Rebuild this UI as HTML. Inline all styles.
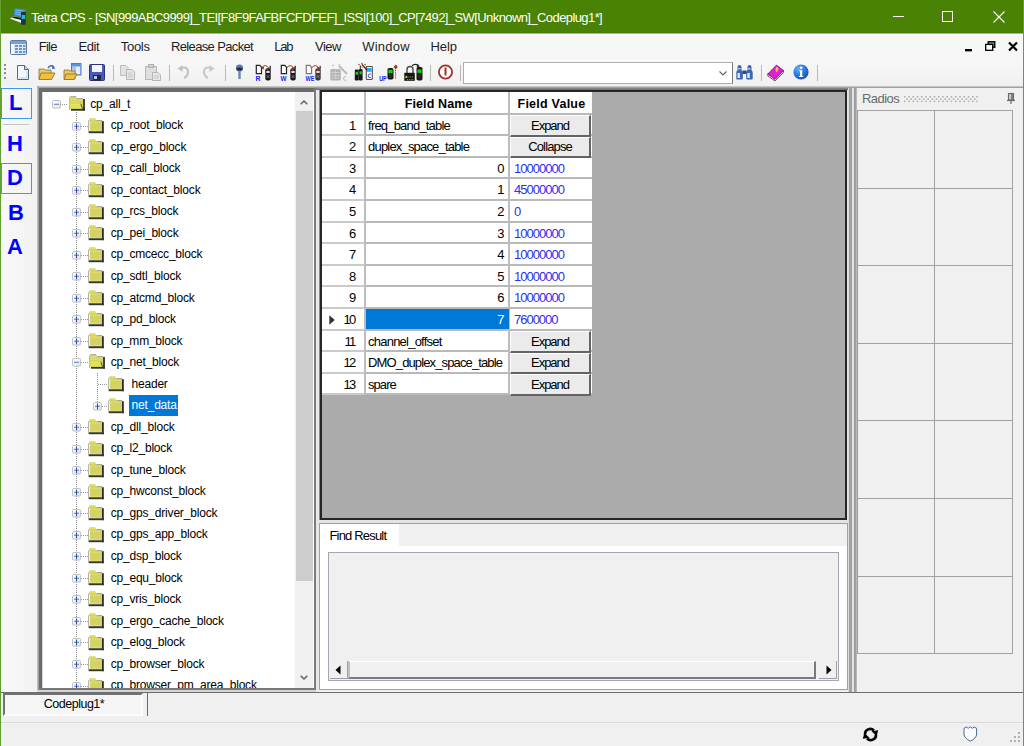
<!DOCTYPE html><html><head><meta charset="utf-8"><style>

*{margin:0;padding:0;box-sizing:border-box}
html,body{width:1024px;height:746px;overflow:hidden;background:#f0f0f0;font-family:"Liberation Sans",sans-serif;position:relative}
.abs{position:absolute}
.t{position:absolute;white-space:nowrap;line-height:1}
svg{position:absolute;overflow:visible}

</style></head><body>
<div class="abs" style="left:0;top:0;width:1024px;height:33px;background:#498205"></div>
<div class="abs" style="left:0;top:0;width:1px;height:746px;background:#62a032"></div>
<div class="abs" style="left:1023px;top:0;width:1px;height:746px;background:#62a032"></div>
<svg style="left:9px;top:7px" width="18" height="19" viewBox="0 0 18 19">
<path d="M5.7 1.2 L17 2.5 L15 10.5 L5 8.3 Z" fill="#3c8ee6"/>
<path d="M6.5 3 L15 4 M6.3 5 L14.5 6 M6 7 L13 8" stroke="#7cc0f4" stroke-width="0.8"/>
<path d="M0.8 11.5 L6 9.3 L13.5 11.5 L12.5 16 Z" fill="#f0f0f4"/>
<path d="M3 10.8 L6 9.5 L13 11.3 L12.7 13 Z" fill="#151515"/>
<rect x="12" y="4.7" width="4.8" height="13" rx="0.8" fill="#2a3038"/>
<rect x="12.6" y="8" width="3.6" height="4" fill="#28b0e8"/>
</svg>
<div class="t" style="left:31.20px;top:11.29px;font-size:13px;color:#fff;letter-spacing:-0.586px">Tetra CPS - [SN[999ABC9999]_TEI[F8F9FAFBFCFDFEF]_ISSI[100]_CP[7492]_SW[Unknown]_Codeplug1*]</div>
<div class="abs" style="left:893px;top:16px;width:11px;height:1px;background:#fff"></div>
<div class="abs" style="left:942px;top:11px;width:11px;height:11px;border:1px solid #fff"></div>
<svg style="left:993px;top:11px" width="12" height="12" viewBox="0 0 12 12"><path d="M0.5 0.5 L11.5 11.5 M11.5 0.5 L0.5 11.5" stroke="#fff" stroke-width="1.1"/></svg>
<div class="abs" style="left:1px;top:33px;width:1022px;height:26px;background:linear-gradient(#a4c182 0 1px,#fff 1px 2px,#f7f7f7 2px,#f6f6f6)"></div>
<div class="abs" style="left:1px;top:32px;width:1022px;height:1px;background:#457c03"></div>
<svg style="left:9.5px;top:39.5px" width="17" height="15" viewBox="0 0 17 15">
<rect x="0.5" y="0.5" width="16" height="14" rx="1" fill="#dfe9f5" stroke="#5a7ca8"/>
<rect x="1" y="1" width="15" height="3" fill="#7aa0d0"/>
<g fill="#6f95c8"><rect x="5" y="5" width="3" height="2"/><rect x="9" y="5" width="3" height="2"/><rect x="13" y="5" width="2.5" height="2"/>
<rect x="5" y="8" width="3" height="2"/><rect x="9" y="8" width="3" height="2"/><rect x="13" y="8" width="2.5" height="2"/>
<rect x="5" y="11" width="3" height="2"/><rect x="9" y="11" width="3" height="2"/><rect x="13" y="11" width="2.5" height="2"/></g>
<rect x="1" y="4" width="3" height="10" fill="#f4f8fc"/>
</svg>
<div class="t" style="left:38.70px;top:39.79px;font-size:13px;color:#1e1e1e;letter-spacing:-0.747px">File</div>
<div class="t" style="left:78.50px;top:39.79px;font-size:13px;color:#1e1e1e;letter-spacing:-0.433px">Edit</div>
<div class="t" style="left:120.70px;top:39.79px;font-size:13px;color:#1e1e1e;letter-spacing:-0.260px">Tools</div>
<div class="t" style="left:171.00px;top:39.79px;font-size:13px;color:#1e1e1e;letter-spacing:-0.643px">Release Packet</div>
<div class="t" style="left:274.20px;top:39.79px;font-size:13px;color:#1e1e1e;letter-spacing:-1.250px">Lab</div>
<div class="t" style="left:315.00px;top:39.79px;font-size:13px;color:#1e1e1e;letter-spacing:-0.493px">View</div>
<div class="t" style="left:362.30px;top:39.79px;font-size:13px;color:#1e1e1e;letter-spacing:0.208px">Window</div>
<div class="t" style="left:430.40px;top:39.79px;font-size:13px;color:#1e1e1e;letter-spacing:-0.047px">Help</div>
<div class="abs" style="left:965px;top:49px;width:7px;height:2px;background:#000;box-shadow:0 0.5px 0 #444"></div>
<svg style="left:985px;top:41px" width="11" height="10" viewBox="0 0 11 10"><rect x="3.2" y="0.7" width="6.6" height="5.6" fill="#888" stroke="#000" stroke-width="1.3"/><rect x="0.7" y="3.4" width="7" height="5.9" fill="#fff" stroke="#000" stroke-width="1.3"/></svg>
<svg style="left:1008px;top:42px" width="10" height="9" viewBox="0 0 10 9"><path d="M1 0.5 L9 8.5 M9 0.5 L1 8.5" stroke="#000" stroke-width="2.2"/></svg>
<div class="abs" style="left:1px;top:59px;width:1022px;height:27px;background:linear-gradient(#f8f8f8,#f0f0f0)"></div>
<div class="abs" style="left:35px;top:86px;width:988px;height:4px;background:linear-gradient(#d8d8d8,#a4a4a4 35%,#7c7c7c 70%,#6a6a6a)"></div>
<div class="abs" style="left:4px;top:64px;width:2px;height:2px;background:#8a8a8a"></div>
<div class="abs" style="left:4px;top:68px;width:2px;height:2px;background:#8a8a8a"></div>
<div class="abs" style="left:4px;top:72px;width:2px;height:2px;background:#8a8a8a"></div>
<div class="abs" style="left:4px;top:77px;width:2px;height:2px;background:#8a8a8a"></div>
<div class="abs" style="left:113px;top:65px;width:1px;height:16px;background:#b8b8b8"></div>
<div class="abs" style="left:169px;top:65px;width:1px;height:16px;background:#b8b8b8"></div>
<div class="abs" style="left:225px;top:65px;width:1px;height:16px;background:#b8b8b8"></div>
<div class="abs" style="left:430px;top:65px;width:1px;height:16px;background:#b8b8b8"></div>
<div class="abs" style="left:460px;top:65px;width:1px;height:16px;background:#b8b8b8"></div>
<div class="abs" style="left:761px;top:65px;width:1px;height:16px;background:#b8b8b8"></div>
<div class="abs" style="left:817px;top:65px;width:1px;height:16px;background:#b8b8b8"></div>
<svg style="left:16px;top:64px" width="14" height="17" viewBox="0 0 14 17"><path d="M1.5 1.5 H8.5 L12.5 5.5 V15.5 H1.5 Z" fill="#f4f7fb" stroke="#4a6a8a" stroke-width="1"/><path d="M8.5 1.5 V5.5 H12.5" fill="#c8d4e0" stroke="#4a6a8a"/><path d="M3 14 L11 14 L11 7" stroke="#c0cde0" fill="none"/></svg>
<svg style="left:38px;top:64px" width="19" height="17" viewBox="0 0 19 17"><path d="M1 5 H6 L7 6 H13 V15 H1 Z" fill="#e8c860" stroke="#8a7040" stroke-width="0.8"/><path d="M3 9 H17 L13.5 15.5 H1 Z" fill="#f2c040" stroke="#8a6a30" stroke-width="0.8"/><path d="M10 4 Q13 0 16 3" fill="none" stroke="#3a6ab0" stroke-width="1.4"/><path d="M14.5 1.5 L17.5 4.5 L14 5 Z" fill="#3a6ab0"/></svg>
<svg style="left:63px;top:63px" width="19" height="18" viewBox="0 0 19 18"><rect x="8.5" y="0.5" width="9.5" height="11.5" fill="#a8c8ee" stroke="#4a7cc8"/><rect x="9" y="1" width="8.5" height="2.2" fill="#5a94dc"/><rect x="13" y="4" width="4" height="7" fill="#e8f0fa"/><path d="M1 7 H6 L7 8 H12 V16 H1 Z" fill="#e8c860" stroke="#8a7040" stroke-width="0.8"/><path d="M3 11 H14 L11 16.5 H1 Z" fill="#f2c040" stroke="#8a6a30" stroke-width="0.8"/></svg>
<svg style="left:89px;top:64px" width="16" height="17" viewBox="0 0 16 17"><rect x="0.5" y="0.5" width="15" height="16" rx="1" fill="#4a5ab8" stroke="#2a3478"/><rect x="3" y="1" width="10" height="7" fill="#f4f6fa"/><rect x="4" y="11" width="8" height="5.5" fill="#20284a"/><rect x="5" y="12" width="3" height="3" fill="#c0c8e0"/></svg>
<svg style="left:119px;top:64px" width="17" height="16" viewBox="0 0 17 16"><path d="M1.5 1.5 H7 L9 3.5 V11.5 H1.5 Z" fill="#e2e2e2" stroke="#bdbdbd"/><path d="M7.5 5.5 H13 L15.5 8 V15.5 H7.5 Z" fill="#e6e6e6" stroke="#b5b5b5"/><path d="M9 9 H13 M9 11 H14 M9 13 H14" stroke="#c4c4c4"/></svg>
<svg style="left:144px;top:64px" width="18" height="17" viewBox="0 0 18 17"><rect x="1.5" y="2.5" width="11" height="13" fill="#dedede" stroke="#b8b8b8"/><rect x="4.5" y="0.5" width="5" height="3" fill="#d0d0d0" stroke="#b0b0b0"/><path d="M8.5 8.5 H14 L16.5 11 V16.5 H8.5 Z" fill="#e8e8e8" stroke="#b5b5b5"/><path d="M10 12 H15 M10 14 H15" stroke="#c4c4c4"/></svg>
<svg style="left:177px;top:64px" width="14" height="15" viewBox="0 0 14 15"><path d="M4 4 Q11 2 11 8 Q11 12 7 14" fill="none" stroke="#c2c2c2" stroke-width="2.2"/><path d="M0.5 4.5 L5.5 1 L5.5 8 Z" fill="#c2c2c2"/></svg>
<svg style="left:201px;top:64px" width="14" height="15" viewBox="0 0 14 15"><path d="M10 4 Q3 2 3 8 Q3 12 7 14" fill="none" stroke="#c8c8c8" stroke-width="2.2"/><path d="M13.5 4.5 L8.5 1 L8.5 8 Z" fill="#c8c8c8"/></svg>
<svg style="left:235px;top:64px" width="9" height="16" viewBox="0 0 9 16"><circle cx="4.5" cy="4" r="3.6" fill="#5e7a9c"/><ellipse cx="4.5" cy="5" rx="3" ry="1.5" fill="#1a2a60"/><rect x="3.3" y="7" width="2.4" height="8" fill="#6a86a8"/></svg>
<svg style="left:255px;top:64px" width="18" height="17" viewBox="0 0 18 17"><path d="M1.3 1.3 H4.8 L6.5 3.2 V9.6 H1.3 Z" fill="#fff" stroke="#222" stroke-width="1.2"/><rect x="10.3" y="4.3" width="5.4" height="12.3" rx="2" fill="#1a1a1a"/><rect x="14.6" y="1.8" width="1.2" height="3.5" fill="#1a1a1a"/><rect x="11.4" y="6.8" width="3.2" height="2.2" fill="#e0e0e0"/><circle cx="12.2" cy="5.8" r="0.9" fill="#c02020"/><path d="M11.5 11 L14.5 14 M14.5 11 L11.5 14" stroke="#8a8a8a" stroke-width="0.8"/><path d="M7 3.5 Q10.5 -0.5 13.8 4" fill="none" stroke="#a82a1a" stroke-width="1"/><path d="M5.8 4.5 L9 2.2 L8.8 5.2 Z" fill="#a82a1a"/><text x="0.5" y="16.6" font-family="Liberation Sans" font-weight="bold" font-size="6.5" fill="#2020ff" textLength="5" lengthAdjust="spacingAndGlyphs">R</text></svg>
<svg style="left:280px;top:64px" width="18" height="17" viewBox="0 0 18 17"><path d="M1.3 1.3 H4.8 L6.5 3.2 V9.6 H1.3 Z" fill="#fff" stroke="#222" stroke-width="1.2"/><rect x="10.3" y="4.3" width="5.4" height="12.3" rx="2" fill="#1a1a1a"/><rect x="14.6" y="1.8" width="1.2" height="3.5" fill="#1a1a1a"/><rect x="11.4" y="6.8" width="3.2" height="2.2" fill="#e0e0e0"/><circle cx="12.2" cy="5.8" r="0.9" fill="#c02020"/><path d="M11.5 11 L14.5 14 M14.5 11 L11.5 14" stroke="#8a8a8a" stroke-width="0.8"/><path d="M7 3.5 Q10.5 -0.5 13.8 4" fill="none" stroke="#a82a1a" stroke-width="1"/><path d="M12 3 L15 3.2 L13.5 6 Z" fill="#a82a1a"/><text x="0.5" y="16.6" font-family="Liberation Sans" font-weight="bold" font-size="6.5" fill="#2020ff" textLength="6" lengthAdjust="spacingAndGlyphs">W</text></svg>
<svg style="left:305px;top:64px" width="18" height="17" viewBox="0 0 18 17"><path d="M1.3 1.3 H4.8 L6.5 3.2 V9.6 H1.3 Z" fill="#fff" stroke="#777" stroke-width="1.2"/><rect x="10.3" y="4.3" width="5.4" height="12.3" rx="2" fill="#3a3a3a"/><rect x="14.6" y="1.8" width="1.2" height="3.5" fill="#3a3a3a"/><rect x="11.4" y="6.8" width="3.2" height="2.2" fill="#e0e0e0"/><circle cx="12.2" cy="5.8" r="0.9" fill="#c02020"/><path d="M11.5 11 L14.5 14 M14.5 11 L11.5 14" stroke="#8a8a8a" stroke-width="0.8"/><path d="M7 3.5 Q10.5 -0.5 13.8 4" fill="none" stroke="#a82a1a" stroke-width="1"/><path d="M12 3 L15 3.2 L13.5 6 Z" fill="#a82a1a"/><text x="0.5" y="16.6" font-family="Liberation Sans" font-weight="bold" font-size="6.5" fill="#2020ff" textLength="9" lengthAdjust="spacingAndGlyphs">WE</text></svg>
<svg style="left:330px;top:64px" width="19" height="17" viewBox="0 0 19 17"><rect x="0.3" y="5" width="10.5" height="11.5" rx="1.5" fill="#b4b4b4"/><path d="M1.5 8.5 H9.5 M1.5 11.5 H9.5 M1.5 14 H9.5" stroke="#d8d8d8" stroke-width="0.8"/><path d="M5.5 6 V15" stroke="#d0d0d0" stroke-width="0.8"/><path d="M9 2 L17 10" stroke="#b8b8b8" stroke-width="1.8"/><circle cx="3" cy="1.5" r="0.9" fill="#c4c4c4"/><circle cx="9" cy="0.8" r="0.9" fill="#c4c4c4"/><path d="M16 12.5 Q13.5 12.5 13.5 14.5 Q13.5 16.5 16 16.5" fill="none" stroke="#b0b0b0" stroke-width="0.9"/></svg>
<svg style="left:354px;top:63px" width="20" height="18" viewBox="0 0 20 18"><rect x="0.8" y="6.5" width="4" height="11" rx="1.2" fill="#141414"/><rect x="1.6" y="8.8" width="2.4" height="3" fill="#10d010"/><rect x="4.8" y="6" width="3.8" height="11.5" rx="1.2" fill="#181818"/><rect x="5.6" y="8.3" width="2.3" height="3" fill="#10c810"/><rect x="5.8" y="2.5" width="1" height="4" fill="#222"/><rect x="12.3" y="3.5" width="6" height="13" rx="0.8" fill="#fff" stroke="#505050" stroke-width="1.1"/><rect x="13" y="5" width="4.6" height="3.8" fill="#18b0f0"/><path d="M16.8 11 Q14.2 10.5 14.2 12.8 Q14.2 15 16.8 14.6" fill="none" stroke="#4a4af0" stroke-width="1"/><path d="M8 1.5 L13 7" stroke="#303030" stroke-width="1.3"/><circle cx="8.5" cy="4" r="1.1" fill="#c8c030"/><circle cx="5" cy="1.5" r="0.8" fill="#c04040"/><circle cx="8" cy="0.6" r="0.8" fill="#b05050"/><circle cx="11" cy="1.5" r="0.8" fill="#a04848"/><circle cx="12.5" cy="4" r="0.8" fill="#c04040"/></svg>
<svg style="left:378px;top:64px" width="20" height="17" viewBox="0 0 20 17"><rect x="9.5" y="4" width="6" height="11.6" rx="1.8" fill="#161616"/><rect x="10.4" y="5.8" width="4.2" height="3.4" fill="#10d010"/><path d="M11 11 H14 M11 13 H14" stroke="#555" stroke-width="0.6"/><path d="M17.5 4 V15" stroke="#b04040" stroke-width="1.1" stroke-dasharray="1.2,0.9"/><path d="M15.5 3.5 L17.8 0.5 L19.8 3.5 Z" fill="#9a2a20"/><circle cx="17.8" cy="3" r="1.6" fill="#a03028"/><text x="1.2" y="16.5" font-family="Liberation Sans" font-weight="bold" font-size="6.5" fill="#1010ff" textLength="7.5" lengthAdjust="spacingAndGlyphs">UP</text></svg>
<svg style="left:404px;top:63px" width="19" height="18" viewBox="0 0 19 18"><path d="M3 10 V6.5 Q3 3.5 6 3.5 Q9 3.5 9 6.5 V10" fill="none" stroke="#4a4a4a" stroke-width="1.4"/><rect x="0.3" y="9.8" width="10.5" height="8" fill="#141414"/><path d="M1.5 12.5 L4 14 L1.5 15.5 Z" fill="#d8e040"/><path d="M4.5 14 H9.5" stroke="#60b020" stroke-width="1.2" stroke-dasharray="1,0.8"/><path d="M3 16.5 H10" stroke="#a0c020" stroke-width="0.8" stroke-dasharray="1,0.8"/><path d="M8 2.8 Q11 0.2 14.5 2.5" fill="none" stroke="#222" stroke-width="1.3"/><path d="M13 1.2 L16 3.5 L12.8 4.5 Z" fill="#222"/><rect x="12.5" y="4" width="6" height="13.5" rx="1.8" fill="#181818"/><rect x="13.4" y="6.5" width="4.2" height="3.4" fill="#10d010"/><path d="M14 12 H17 M14 14 H17" stroke="#555" stroke-width="0.6"/></svg>
<svg style="left:437px;top:64px" width="17" height="16" viewBox="0 0 17 16"><circle cx="8.5" cy="8" r="6.6" fill="#fff" stroke="#a03028" stroke-width="1.8"/><rect x="7.5" y="3.5" width="2" height="8" fill="#a03028"/></svg>
<div class="abs" style="left:463px;top:62px;width:270px;height:22px;background:#fff;border:1px solid #adadad;border-right-color:#7a7a7a"></div>
<svg style="left:719px;top:71px" width="8" height="5" viewBox="0 0 8 5"><path d="M0.5 0.5 L4 4 L7.5 0.5" fill="none" stroke="#606060" stroke-width="1.1"/></svg>
<svg style="left:736px;top:64px" width="17" height="16" viewBox="0 0 17 16"><path d="M1.5 3 Q1.5 1 3.5 1 Q5.5 1 5.5 3 V6 L6.8 8 V14.5 Q6.8 15.5 5.8 15.5 H1.2 Q0.3 15.5 0.3 14.5 V8 L1.5 6 Z" fill="#3a66b4"/><path d="M11.5 3 Q11.5 1 13.5 1 Q15.5 1 15.5 3 V6 L16.7 8 V14.5 Q16.7 15.5 15.7 15.5 H11.2 Q10.2 15.5 10.2 14.5 V8 L11.5 6 Z" fill="#3a66b4"/><rect x="6.5" y="6.5" width="4" height="3.5" fill="#2a4a90"/><rect x="1.5" y="4" width="3" height="1.5" fill="#a8c4ec"/><rect x="11.5" y="4" width="3" height="1.5" fill="#a8c4ec"/><rect x="1.5" y="9" width="2.5" height="5" fill="#dbe8f8"/><rect x="11.3" y="9" width="2.5" height="5" fill="#dbe8f8"/></svg>
<svg style="left:767px;top:64px" width="18" height="17" viewBox="0 0 18 17"><path d="M0.8 10 L9.5 1.2 L16.5 6.5 L8 15.5 Z" fill="#e020d0" stroke="#7a1070" stroke-width="0.9"/><path d="M0.8 10 L0.8 12 L8 17 L16.5 8.5 L16.5 6.5 L8 15.5 Z" fill="#f4eef4" stroke="#7a1070" stroke-width="0.8"/><path d="M8.5 5.5 Q10 3.5 11.5 5 Q11 7 9.5 8.5 Q8.5 7.5 8.5 5.5 Z" fill="#e8c040"/><circle cx="10" cy="4.3" r="1.2" fill="#f0d060"/></svg>
<svg style="left:793px;top:64px" width="16" height="16" viewBox="0 0 16 16"><defs><radialGradient id="ig" cx="0.35" cy="0.3" r="0.8"><stop offset="0" stop-color="#6ab0f4"/><stop offset="0.6" stop-color="#1e72d8"/><stop offset="1" stop-color="#1a4aa0"/></radialGradient></defs><circle cx="8" cy="8" r="7.6" fill="url(#ig)"/><circle cx="8.2" cy="3.8" r="1.3" fill="#fff"/><path d="M6.3 6.3 H9.2 V12 H10.3 V13 H6 V12 H7 V7.3 H6.3 Z" fill="#fff"/></svg>
<div class="abs" style="left:1px;top:86px;width:36px;height:606px;background:linear-gradient(90deg,#f8f8f8,#f2f2f2);border-bottom-right-radius:4px"></div>
<div class="abs" style="left:1px;top:88px;width:31px;height:31px;border:1px solid #3c98f0"></div>
<div class="abs" style="left:1px;top:163px;width:31px;height:31px;border:1px solid #3c98f0"></div>
<div class="abs" style="left:3px;top:124px;width:26px;height:1px;background:#c4c4c4"></div>
<div class="t" style="left:9px;top:92px;font-size:22px;font-weight:bold;color:#0000ff">L</div>
<div class="t" style="left:7px;top:133px;font-size:22px;font-weight:bold;color:#0000ff">H</div>
<div class="t" style="left:7px;top:167px;font-size:22px;font-weight:bold;color:#0000ff">D</div>
<div class="t" style="left:8px;top:202px;font-size:22px;font-weight:bold;color:#0000ff">B</div>
<div class="t" style="left:7px;top:236px;font-size:22px;font-weight:bold;color:#0000ff">A</div>
<div class="abs" style="left:37px;top:88px;width:279px;height:604px;background:#6b6b6b"></div>
<div class="abs" style="left:37px;top:86px;width:2px;height:606px;background:linear-gradient(90deg,#c4c4c4,#949494)"></div>
<div class="abs" style="left:42px;top:92px;width:272px;height:596px;background:#fff"></div>
<div class="abs" style="left:42px;top:92px;width:1px;height:596px;background:#d8d8d8"></div>
<div class="abs" style="left:314px;top:88px;width:2px;height:602px;background:#787c80"></div>
<div class="abs" style="left:39px;top:688px;width:277px;height:2px;background:#787878"></div>
<div class="abs" style="left:37px;top:690px;width:279px;height:2px;background:#d4d4d4"></div>
<div class="abs" style="left:295px;top:92px;width:18px;height:596px;background:#f0f0f0"></div>
<div class="abs" style="left:295.5px;top:111px;width:17px;height:470px;background:#cdcdcd"></div>
<svg style="left:300px;top:99.5px" width="8" height="5" viewBox="0 0 8 5"><path d="M0.7 4.3 L4 1 L7.3 4.3" fill="none" stroke="#606060" stroke-width="1.5"/></svg>
<svg style="left:300px;top:675px" width="8" height="5" viewBox="0 0 8 5"><path d="M0.7 0.7 L4 4 L7.3 0.7" fill="none" stroke="#606060" stroke-width="1.5"/></svg>
<div class="abs" style="left:0;top:0;width:1024px;height:746px;clip-path:inset(92px 729px 58px 43px)">
<svg style="left:52.3px;top:99.8px" width="9" height="9" viewBox="0 0 9 9"><defs><linearGradient id="eg" x1="0" y1="0" x2="1" y2="1"><stop offset="0" stop-color="#fff"/><stop offset="1" stop-color="#e4e4e4"/></linearGradient></defs><rect x="0.5" y="0.5" width="8" height="7.6" rx="1.2" fill="url(#eg)" stroke="#c2c2c2"/><path d="M2 4.3 H7" stroke="#5b8ad2" stroke-width="1.1"/></svg>
<div class="abs" style="left:60px;top:104px;width:7px;height:1px;background:repeating-linear-gradient(90deg,#9a9a9a 0 1px,transparent 1px 2px)"></div>
<svg style="left:68px;top:96.0px" width="18" height="16" viewBox="0 0 18 16"><rect x="1" y="1.5" width="1.1" height="12.5" fill="#b8b8b8"/><path d="M1.8 0.8 Q2 0.2 3 0.2 H8 L9 2.3 H15.2 V13 H1.8 Z" fill="#d4d468"/><path d="M2.5 0.6 H8" stroke="#a8a8a8" stroke-width="1"/><path d="M9 2.5 H15.2" stroke="#a0a0a0" stroke-width="0.9"/><path d="M3 3.2 H9 M3 5.5 H9" stroke="#eeee50" stroke-width="1.2" stroke-dasharray="1.2,0.8"/><path d="M9.5 4.2 H14.5" stroke="#e6e65a" stroke-width="1" stroke-dasharray="1.2,0.8"/><path d="M1.5 7.8 H12.8 L14.5 12.8 H3 Z" fill="#e0e060"/><path d="M2.5 8.5 H12.5 M3.5 12 H13.5" stroke="#f0f048" stroke-width="1" stroke-dasharray="1.2,0.8"/><path d="M12.8 7.8 L14.5 12.8" stroke="#505040" stroke-width="1"/><rect x="15.1" y="3" width="1.8" height="11.6" fill="#2e2e2e"/><rect x="3" y="12.9" width="13.9" height="1.8" fill="#303030"/></svg>
<div class="t" style="left:90.30px;top:97.68px;font-size:12px;color:#000;letter-spacing:-0.177px">cp_all_t</div>
<div class="abs" style="left:76px;top:112px;width:1px;height:588px;background:repeating-linear-gradient(#8a8a8a 0 1px,transparent 1px 2px)"></div>
<svg style="left:72.3px;top:121.8px" width="9" height="9" viewBox="0 0 9 9"><rect x="0.5" y="0.5" width="8" height="7.6" rx="1.2" fill="url(#eg)" stroke="#c2c2c2"/><path d="M2 4.3 H7" stroke="#5b8ad2" stroke-width="1.1"/><path d="M4.5 1.5 V7.3" stroke="#2d4fa6" stroke-width="1.1"/></svg>
<div class="abs" style="left:81px;top:126px;width:7px;height:1px;background:repeating-linear-gradient(90deg,#9a9a9a 0 1px,transparent 1px 2px)"></div>
<svg style="left:88px;top:117.53999999999999px" width="17" height="16" viewBox="0 0 17 16"><rect x="0" y="2.4" width="1.1" height="12.8" fill="#b4b4b4"/><path d="M1 1.2 Q1.5 0.3 2.5 0.3 H7 L8.6 2.6 H14 V13.4 H1 Z" fill="#d2d266"/><path d="M8.6 2.6 H14.2" stroke="#9a9a8a" stroke-width="0.9"/><rect x="1.1" y="3" width="1" height="10.4" fill="#f4f4e0"/><path d="M2.5 4.2 H13.5 M2.5 12.3 H13.5" stroke="#ecec5a" stroke-width="1" stroke-dasharray="1.3,0.8"/><path d="M2 1.5 H7" stroke="#e8e860" stroke-width="1.2" stroke-dasharray="1.3,0.8"/><rect x="14" y="3.2" width="1.8" height="12" fill="#2c2c2c"/><rect x="1" y="13.3" width="14.8" height="1.9" fill="#343434"/></svg>
<div class="t" style="left:110.70px;top:119.22px;font-size:12px;color:#000;letter-spacing:-0.187px">cp_root_block</div>
<svg style="left:72.3px;top:142.8px" width="9" height="9" viewBox="0 0 9 9"><rect x="0.5" y="0.5" width="8" height="7.6" rx="1.2" fill="url(#eg)" stroke="#c2c2c2"/><path d="M2 4.3 H7" stroke="#5b8ad2" stroke-width="1.1"/><path d="M4.5 1.5 V7.3" stroke="#2d4fa6" stroke-width="1.1"/></svg>
<div class="abs" style="left:81px;top:147px;width:7px;height:1px;background:repeating-linear-gradient(90deg,#9a9a9a 0 1px,transparent 1px 2px)"></div>
<svg style="left:88px;top:139.07999999999998px" width="17" height="16" viewBox="0 0 17 16"><rect x="0" y="2.4" width="1.1" height="12.8" fill="#b4b4b4"/><path d="M1 1.2 Q1.5 0.3 2.5 0.3 H7 L8.6 2.6 H14 V13.4 H1 Z" fill="#d2d266"/><path d="M8.6 2.6 H14.2" stroke="#9a9a8a" stroke-width="0.9"/><rect x="1.1" y="3" width="1" height="10.4" fill="#f4f4e0"/><path d="M2.5 4.2 H13.5 M2.5 12.3 H13.5" stroke="#ecec5a" stroke-width="1" stroke-dasharray="1.3,0.8"/><path d="M2 1.5 H7" stroke="#e8e860" stroke-width="1.2" stroke-dasharray="1.3,0.8"/><rect x="14" y="3.2" width="1.8" height="12" fill="#2c2c2c"/><rect x="1" y="13.3" width="14.8" height="1.9" fill="#343434"/></svg>
<div class="t" style="left:110.70px;top:140.76px;font-size:12px;color:#000;letter-spacing:-0.195px">cp_ergo_block</div>
<svg style="left:72.3px;top:164.8px" width="9" height="9" viewBox="0 0 9 9"><rect x="0.5" y="0.5" width="8" height="7.6" rx="1.2" fill="url(#eg)" stroke="#c2c2c2"/><path d="M2 4.3 H7" stroke="#5b8ad2" stroke-width="1.1"/><path d="M4.5 1.5 V7.3" stroke="#2d4fa6" stroke-width="1.1"/></svg>
<div class="abs" style="left:81px;top:169px;width:7px;height:1px;background:repeating-linear-gradient(90deg,#9a9a9a 0 1px,transparent 1px 2px)"></div>
<svg style="left:88px;top:160.62px" width="17" height="16" viewBox="0 0 17 16"><rect x="0" y="2.4" width="1.1" height="12.8" fill="#b4b4b4"/><path d="M1 1.2 Q1.5 0.3 2.5 0.3 H7 L8.6 2.6 H14 V13.4 H1 Z" fill="#d2d266"/><path d="M8.6 2.6 H14.2" stroke="#9a9a8a" stroke-width="0.9"/><rect x="1.1" y="3" width="1" height="10.4" fill="#f4f4e0"/><path d="M2.5 4.2 H13.5 M2.5 12.3 H13.5" stroke="#ecec5a" stroke-width="1" stroke-dasharray="1.3,0.8"/><path d="M2 1.5 H7" stroke="#e8e860" stroke-width="1.2" stroke-dasharray="1.3,0.8"/><rect x="14" y="3.2" width="1.8" height="12" fill="#2c2c2c"/><rect x="1" y="13.3" width="14.8" height="1.9" fill="#343434"/></svg>
<div class="t" style="left:110.70px;top:162.30px;font-size:12px;color:#000;letter-spacing:-0.180px">cp_call_block</div>
<svg style="left:72.3px;top:185.8px" width="9" height="9" viewBox="0 0 9 9"><rect x="0.5" y="0.5" width="8" height="7.6" rx="1.2" fill="url(#eg)" stroke="#c2c2c2"/><path d="M2 4.3 H7" stroke="#5b8ad2" stroke-width="1.1"/><path d="M4.5 1.5 V7.3" stroke="#2d4fa6" stroke-width="1.1"/></svg>
<div class="abs" style="left:81px;top:190px;width:7px;height:1px;background:repeating-linear-gradient(90deg,#9a9a9a 0 1px,transparent 1px 2px)"></div>
<svg style="left:88px;top:182.16px" width="17" height="16" viewBox="0 0 17 16"><rect x="0" y="2.4" width="1.1" height="12.8" fill="#b4b4b4"/><path d="M1 1.2 Q1.5 0.3 2.5 0.3 H7 L8.6 2.6 H14 V13.4 H1 Z" fill="#d2d266"/><path d="M8.6 2.6 H14.2" stroke="#9a9a8a" stroke-width="0.9"/><rect x="1.1" y="3" width="1" height="10.4" fill="#f4f4e0"/><path d="M2.5 4.2 H13.5 M2.5 12.3 H13.5" stroke="#ecec5a" stroke-width="1" stroke-dasharray="1.3,0.8"/><path d="M2 1.5 H7" stroke="#e8e860" stroke-width="1.2" stroke-dasharray="1.3,0.8"/><rect x="14" y="3.2" width="1.8" height="12" fill="#2c2c2c"/><rect x="1" y="13.3" width="14.8" height="1.9" fill="#343434"/></svg>
<div class="t" style="left:110.70px;top:183.84px;font-size:12px;color:#000;letter-spacing:-0.185px">cp_contact_block</div>
<svg style="left:72.3px;top:207.8px" width="9" height="9" viewBox="0 0 9 9"><rect x="0.5" y="0.5" width="8" height="7.6" rx="1.2" fill="url(#eg)" stroke="#c2c2c2"/><path d="M2 4.3 H7" stroke="#5b8ad2" stroke-width="1.1"/><path d="M4.5 1.5 V7.3" stroke="#2d4fa6" stroke-width="1.1"/></svg>
<div class="abs" style="left:81px;top:212px;width:7px;height:1px;background:repeating-linear-gradient(90deg,#9a9a9a 0 1px,transparent 1px 2px)"></div>
<svg style="left:88px;top:203.7px" width="17" height="16" viewBox="0 0 17 16"><rect x="0" y="2.4" width="1.1" height="12.8" fill="#b4b4b4"/><path d="M1 1.2 Q1.5 0.3 2.5 0.3 H7 L8.6 2.6 H14 V13.4 H1 Z" fill="#d2d266"/><path d="M8.6 2.6 H14.2" stroke="#9a9a8a" stroke-width="0.9"/><rect x="1.1" y="3" width="1" height="10.4" fill="#f4f4e0"/><path d="M2.5 4.2 H13.5 M2.5 12.3 H13.5" stroke="#ecec5a" stroke-width="1" stroke-dasharray="1.3,0.8"/><path d="M2 1.5 H7" stroke="#e8e860" stroke-width="1.2" stroke-dasharray="1.3,0.8"/><rect x="14" y="3.2" width="1.8" height="12" fill="#2c2c2c"/><rect x="1" y="13.3" width="14.8" height="1.9" fill="#343434"/></svg>
<div class="t" style="left:110.70px;top:205.38px;font-size:12px;color:#000;letter-spacing:-0.191px">cp_rcs_block</div>
<svg style="left:72.3px;top:228.8px" width="9" height="9" viewBox="0 0 9 9"><rect x="0.5" y="0.5" width="8" height="7.6" rx="1.2" fill="url(#eg)" stroke="#c2c2c2"/><path d="M2 4.3 H7" stroke="#5b8ad2" stroke-width="1.1"/><path d="M4.5 1.5 V7.3" stroke="#2d4fa6" stroke-width="1.1"/></svg>
<div class="abs" style="left:81px;top:233px;width:7px;height:1px;background:repeating-linear-gradient(90deg,#9a9a9a 0 1px,transparent 1px 2px)"></div>
<svg style="left:88px;top:225.24px" width="17" height="16" viewBox="0 0 17 16"><rect x="0" y="2.4" width="1.1" height="12.8" fill="#b4b4b4"/><path d="M1 1.2 Q1.5 0.3 2.5 0.3 H7 L8.6 2.6 H14 V13.4 H1 Z" fill="#d2d266"/><path d="M8.6 2.6 H14.2" stroke="#9a9a8a" stroke-width="0.9"/><rect x="1.1" y="3" width="1" height="10.4" fill="#f4f4e0"/><path d="M2.5 4.2 H13.5 M2.5 12.3 H13.5" stroke="#ecec5a" stroke-width="1" stroke-dasharray="1.3,0.8"/><path d="M2 1.5 H7" stroke="#e8e860" stroke-width="1.2" stroke-dasharray="1.3,0.8"/><rect x="14" y="3.2" width="1.8" height="12" fill="#2c2c2c"/><rect x="1" y="13.3" width="14.8" height="1.9" fill="#343434"/></svg>
<div class="t" style="left:110.70px;top:226.92px;font-size:12px;color:#000;letter-spacing:-0.191px">cp_pei_block</div>
<svg style="left:72.3px;top:250.8px" width="9" height="9" viewBox="0 0 9 9"><rect x="0.5" y="0.5" width="8" height="7.6" rx="1.2" fill="url(#eg)" stroke="#c2c2c2"/><path d="M2 4.3 H7" stroke="#5b8ad2" stroke-width="1.1"/><path d="M4.5 1.5 V7.3" stroke="#2d4fa6" stroke-width="1.1"/></svg>
<div class="abs" style="left:81px;top:255px;width:7px;height:1px;background:repeating-linear-gradient(90deg,#9a9a9a 0 1px,transparent 1px 2px)"></div>
<svg style="left:88px;top:246.78px" width="17" height="16" viewBox="0 0 17 16"><rect x="0" y="2.4" width="1.1" height="12.8" fill="#b4b4b4"/><path d="M1 1.2 Q1.5 0.3 2.5 0.3 H7 L8.6 2.6 H14 V13.4 H1 Z" fill="#d2d266"/><path d="M8.6 2.6 H14.2" stroke="#9a9a8a" stroke-width="0.9"/><rect x="1.1" y="3" width="1" height="10.4" fill="#f4f4e0"/><path d="M2.5 4.2 H13.5 M2.5 12.3 H13.5" stroke="#ecec5a" stroke-width="1" stroke-dasharray="1.3,0.8"/><path d="M2 1.5 H7" stroke="#e8e860" stroke-width="1.2" stroke-dasharray="1.3,0.8"/><rect x="14" y="3.2" width="1.8" height="12" fill="#2c2c2c"/><rect x="1" y="13.3" width="14.8" height="1.9" fill="#343434"/></svg>
<div class="t" style="left:110.70px;top:248.46px;font-size:12px;color:#000;letter-spacing:-0.203px">cp_cmcecc_block</div>
<svg style="left:72.3px;top:271.8px" width="9" height="9" viewBox="0 0 9 9"><rect x="0.5" y="0.5" width="8" height="7.6" rx="1.2" fill="url(#eg)" stroke="#c2c2c2"/><path d="M2 4.3 H7" stroke="#5b8ad2" stroke-width="1.1"/><path d="M4.5 1.5 V7.3" stroke="#2d4fa6" stroke-width="1.1"/></svg>
<div class="abs" style="left:81px;top:276px;width:7px;height:1px;background:repeating-linear-gradient(90deg,#9a9a9a 0 1px,transparent 1px 2px)"></div>
<svg style="left:88px;top:268.32px" width="17" height="16" viewBox="0 0 17 16"><rect x="0" y="2.4" width="1.1" height="12.8" fill="#b4b4b4"/><path d="M1 1.2 Q1.5 0.3 2.5 0.3 H7 L8.6 2.6 H14 V13.4 H1 Z" fill="#d2d266"/><path d="M8.6 2.6 H14.2" stroke="#9a9a8a" stroke-width="0.9"/><rect x="1.1" y="3" width="1" height="10.4" fill="#f4f4e0"/><path d="M2.5 4.2 H13.5 M2.5 12.3 H13.5" stroke="#ecec5a" stroke-width="1" stroke-dasharray="1.3,0.8"/><path d="M2 1.5 H7" stroke="#e8e860" stroke-width="1.2" stroke-dasharray="1.3,0.8"/><rect x="14" y="3.2" width="1.8" height="12" fill="#2c2c2c"/><rect x="1" y="13.3" width="14.8" height="1.9" fill="#343434"/></svg>
<div class="t" style="left:110.70px;top:270.00px;font-size:12px;color:#000;letter-spacing:-0.182px">cp_sdtl_block</div>
<svg style="left:72.3px;top:293.8px" width="9" height="9" viewBox="0 0 9 9"><rect x="0.5" y="0.5" width="8" height="7.6" rx="1.2" fill="url(#eg)" stroke="#c2c2c2"/><path d="M2 4.3 H7" stroke="#5b8ad2" stroke-width="1.1"/><path d="M4.5 1.5 V7.3" stroke="#2d4fa6" stroke-width="1.1"/></svg>
<div class="abs" style="left:81px;top:298px;width:7px;height:1px;background:repeating-linear-gradient(90deg,#9a9a9a 0 1px,transparent 1px 2px)"></div>
<svg style="left:88px;top:289.86px" width="17" height="16" viewBox="0 0 17 16"><rect x="0" y="2.4" width="1.1" height="12.8" fill="#b4b4b4"/><path d="M1 1.2 Q1.5 0.3 2.5 0.3 H7 L8.6 2.6 H14 V13.4 H1 Z" fill="#d2d266"/><path d="M8.6 2.6 H14.2" stroke="#9a9a8a" stroke-width="0.9"/><rect x="1.1" y="3" width="1" height="10.4" fill="#f4f4e0"/><path d="M2.5 4.2 H13.5 M2.5 12.3 H13.5" stroke="#ecec5a" stroke-width="1" stroke-dasharray="1.3,0.8"/><path d="M2 1.5 H7" stroke="#e8e860" stroke-width="1.2" stroke-dasharray="1.3,0.8"/><rect x="14" y="3.2" width="1.8" height="12" fill="#2c2c2c"/><rect x="1" y="13.3" width="14.8" height="1.9" fill="#343434"/></svg>
<div class="t" style="left:110.70px;top:291.54px;font-size:12px;color:#000;letter-spacing:-0.200px">cp_atcmd_block</div>
<svg style="left:72.3px;top:314.8px" width="9" height="9" viewBox="0 0 9 9"><rect x="0.5" y="0.5" width="8" height="7.6" rx="1.2" fill="url(#eg)" stroke="#c2c2c2"/><path d="M2 4.3 H7" stroke="#5b8ad2" stroke-width="1.1"/><path d="M4.5 1.5 V7.3" stroke="#2d4fa6" stroke-width="1.1"/></svg>
<div class="abs" style="left:81px;top:319px;width:7px;height:1px;background:repeating-linear-gradient(90deg,#9a9a9a 0 1px,transparent 1px 2px)"></div>
<svg style="left:88px;top:311.4px" width="17" height="16" viewBox="0 0 17 16"><rect x="0" y="2.4" width="1.1" height="12.8" fill="#b4b4b4"/><path d="M1 1.2 Q1.5 0.3 2.5 0.3 H7 L8.6 2.6 H14 V13.4 H1 Z" fill="#d2d266"/><path d="M8.6 2.6 H14.2" stroke="#9a9a8a" stroke-width="0.9"/><rect x="1.1" y="3" width="1" height="10.4" fill="#f4f4e0"/><path d="M2.5 4.2 H13.5 M2.5 12.3 H13.5" stroke="#ecec5a" stroke-width="1" stroke-dasharray="1.3,0.8"/><path d="M2 1.5 H7" stroke="#e8e860" stroke-width="1.2" stroke-dasharray="1.3,0.8"/><rect x="14" y="3.2" width="1.8" height="12" fill="#2c2c2c"/><rect x="1" y="13.3" width="14.8" height="1.9" fill="#343434"/></svg>
<div class="t" style="left:110.70px;top:313.08px;font-size:12px;color:#000;letter-spacing:-0.202px">cp_pd_block</div>
<svg style="left:72.3px;top:336.8px" width="9" height="9" viewBox="0 0 9 9"><rect x="0.5" y="0.5" width="8" height="7.6" rx="1.2" fill="url(#eg)" stroke="#c2c2c2"/><path d="M2 4.3 H7" stroke="#5b8ad2" stroke-width="1.1"/><path d="M4.5 1.5 V7.3" stroke="#2d4fa6" stroke-width="1.1"/></svg>
<div class="abs" style="left:81px;top:341px;width:7px;height:1px;background:repeating-linear-gradient(90deg,#9a9a9a 0 1px,transparent 1px 2px)"></div>
<svg style="left:88px;top:332.94px" width="17" height="16" viewBox="0 0 17 16"><rect x="0" y="2.4" width="1.1" height="12.8" fill="#b4b4b4"/><path d="M1 1.2 Q1.5 0.3 2.5 0.3 H7 L8.6 2.6 H14 V13.4 H1 Z" fill="#d2d266"/><path d="M8.6 2.6 H14.2" stroke="#9a9a8a" stroke-width="0.9"/><rect x="1.1" y="3" width="1" height="10.4" fill="#f4f4e0"/><path d="M2.5 4.2 H13.5 M2.5 12.3 H13.5" stroke="#ecec5a" stroke-width="1" stroke-dasharray="1.3,0.8"/><path d="M2 1.5 H7" stroke="#e8e860" stroke-width="1.2" stroke-dasharray="1.3,0.8"/><rect x="14" y="3.2" width="1.8" height="12" fill="#2c2c2c"/><rect x="1" y="13.3" width="14.8" height="1.9" fill="#343434"/></svg>
<div class="t" style="left:110.70px;top:334.62px;font-size:12px;color:#000;letter-spacing:-0.222px">cp_mm_block</div>
<svg style="left:72.3px;top:357.8px" width="9" height="9" viewBox="0 0 9 9"><rect x="0.5" y="0.5" width="8" height="7.6" rx="1.2" fill="url(#eg)" stroke="#c2c2c2"/><path d="M2 4.3 H7" stroke="#5b8ad2" stroke-width="1.1"/></svg>
<div class="abs" style="left:81px;top:362px;width:7px;height:1px;background:repeating-linear-gradient(90deg,#9a9a9a 0 1px,transparent 1px 2px)"></div>
<svg style="left:88px;top:354.48px" width="18" height="16" viewBox="0 0 18 16"><rect x="1" y="1.5" width="1.1" height="12.5" fill="#b8b8b8"/><path d="M1.8 0.8 Q2 0.2 3 0.2 H8 L9 2.3 H15.2 V13 H1.8 Z" fill="#d4d468"/><path d="M2.5 0.6 H8" stroke="#a8a8a8" stroke-width="1"/><path d="M9 2.5 H15.2" stroke="#a0a0a0" stroke-width="0.9"/><path d="M3 3.2 H9 M3 5.5 H9" stroke="#eeee50" stroke-width="1.2" stroke-dasharray="1.2,0.8"/><path d="M9.5 4.2 H14.5" stroke="#e6e65a" stroke-width="1" stroke-dasharray="1.2,0.8"/><path d="M1.5 7.8 H12.8 L14.5 12.8 H3 Z" fill="#e0e060"/><path d="M2.5 8.5 H12.5 M3.5 12 H13.5" stroke="#f0f048" stroke-width="1" stroke-dasharray="1.2,0.8"/><path d="M12.8 7.8 L14.5 12.8" stroke="#505040" stroke-width="1"/><rect x="15.1" y="3" width="1.8" height="11.6" fill="#2e2e2e"/><rect x="3" y="12.9" width="13.9" height="1.8" fill="#303030"/></svg>
<div class="abs" style="left:97px;top:373px;width:1px;height:32px;background:repeating-linear-gradient(#8a8a8a 0 1px,transparent 1px 2px)"></div>
<div class="t" style="left:110.70px;top:356.16px;font-size:12px;color:#000;letter-spacing:-0.193px">cp_net_block</div>
<div class="abs" style="left:98px;top:384px;width:10px;height:1px;background:repeating-linear-gradient(90deg,#9a9a9a 0 1px,transparent 1px 2px)"></div>
<svg style="left:108px;top:376.02px" width="17" height="16" viewBox="0 0 17 16"><rect x="0" y="2.4" width="1.1" height="12.8" fill="#b4b4b4"/><path d="M1 1.2 Q1.5 0.3 2.5 0.3 H7 L8.6 2.6 H14 V13.4 H1 Z" fill="#d2d266"/><path d="M8.6 2.6 H14.2" stroke="#9a9a8a" stroke-width="0.9"/><rect x="1.1" y="3" width="1" height="10.4" fill="#f4f4e0"/><path d="M2.5 4.2 H13.5 M2.5 12.3 H13.5" stroke="#ecec5a" stroke-width="1" stroke-dasharray="1.3,0.8"/><path d="M2 1.5 H7" stroke="#e8e860" stroke-width="1.2" stroke-dasharray="1.3,0.8"/><rect x="14" y="3.2" width="1.8" height="12" fill="#2c2c2c"/><rect x="1" y="13.3" width="14.8" height="1.9" fill="#343434"/></svg>
<div class="t" style="left:131.60px;top:377.70px;font-size:12px;color:#000;letter-spacing:-0.224px">header</div>
<svg style="left:93.3px;top:401.8px" width="9" height="9" viewBox="0 0 9 9"><rect x="0.5" y="0.5" width="8" height="7.6" rx="1.2" fill="url(#eg)" stroke="#c2c2c2"/><path d="M2 4.3 H7" stroke="#5b8ad2" stroke-width="1.1"/><path d="M4.5 1.5 V7.3" stroke="#2d4fa6" stroke-width="1.1"/></svg>
<div class="abs" style="left:102px;top:406px;width:6px;height:1px;background:repeating-linear-gradient(90deg,#9a9a9a 0 1px,transparent 1px 2px)"></div>
<svg style="left:108px;top:397.56px" width="17" height="16" viewBox="0 0 17 16"><rect x="0" y="2.4" width="1.1" height="12.8" fill="#b4b4b4"/><path d="M1 1.2 Q1.5 0.3 2.5 0.3 H7 L8.6 2.6 H14 V13.4 H1 Z" fill="#d2d266"/><path d="M8.6 2.6 H14.2" stroke="#9a9a8a" stroke-width="0.9"/><rect x="1.1" y="3" width="1" height="10.4" fill="#f4f4e0"/><path d="M2.5 4.2 H13.5 M2.5 12.3 H13.5" stroke="#ecec5a" stroke-width="1" stroke-dasharray="1.3,0.8"/><path d="M2 1.5 H7" stroke="#e8e860" stroke-width="1.2" stroke-dasharray="1.3,0.8"/><rect x="14" y="3.2" width="1.8" height="12" fill="#2c2c2c"/><rect x="1" y="13.3" width="14.8" height="1.9" fill="#343434"/></svg>
<div class="abs" style="left:129px;top:395.4px;width:49px;height:20.5px;background:#0078d7"></div>
<div class="t" style="left:131.60px;top:399.24px;font-size:12px;color:#fff;letter-spacing:-0.200px">net_data</div>
<svg style="left:72.3px;top:422.8px" width="9" height="9" viewBox="0 0 9 9"><rect x="0.5" y="0.5" width="8" height="7.6" rx="1.2" fill="url(#eg)" stroke="#c2c2c2"/><path d="M2 4.3 H7" stroke="#5b8ad2" stroke-width="1.1"/><path d="M4.5 1.5 V7.3" stroke="#2d4fa6" stroke-width="1.1"/></svg>
<div class="abs" style="left:81px;top:427px;width:7px;height:1px;background:repeating-linear-gradient(90deg,#9a9a9a 0 1px,transparent 1px 2px)"></div>
<svg style="left:88px;top:419.09999999999997px" width="17" height="16" viewBox="0 0 17 16"><rect x="0" y="2.4" width="1.1" height="12.8" fill="#b4b4b4"/><path d="M1 1.2 Q1.5 0.3 2.5 0.3 H7 L8.6 2.6 H14 V13.4 H1 Z" fill="#d2d266"/><path d="M8.6 2.6 H14.2" stroke="#9a9a8a" stroke-width="0.9"/><rect x="1.1" y="3" width="1" height="10.4" fill="#f4f4e0"/><path d="M2.5 4.2 H13.5 M2.5 12.3 H13.5" stroke="#ecec5a" stroke-width="1" stroke-dasharray="1.3,0.8"/><path d="M2 1.5 H7" stroke="#e8e860" stroke-width="1.2" stroke-dasharray="1.3,0.8"/><rect x="14" y="3.2" width="1.8" height="12" fill="#2c2c2c"/><rect x="1" y="13.3" width="14.8" height="1.9" fill="#343434"/></svg>
<div class="t" style="left:110.70px;top:420.78px;font-size:12px;color:#000;letter-spacing:-0.180px">cp_dll_block</div>
<svg style="left:72.3px;top:444.8px" width="9" height="9" viewBox="0 0 9 9"><rect x="0.5" y="0.5" width="8" height="7.6" rx="1.2" fill="url(#eg)" stroke="#c2c2c2"/><path d="M2 4.3 H7" stroke="#5b8ad2" stroke-width="1.1"/><path d="M4.5 1.5 V7.3" stroke="#2d4fa6" stroke-width="1.1"/></svg>
<div class="abs" style="left:81px;top:449px;width:7px;height:1px;background:repeating-linear-gradient(90deg,#9a9a9a 0 1px,transparent 1px 2px)"></div>
<svg style="left:88px;top:440.64px" width="17" height="16" viewBox="0 0 17 16"><rect x="0" y="2.4" width="1.1" height="12.8" fill="#b4b4b4"/><path d="M1 1.2 Q1.5 0.3 2.5 0.3 H7 L8.6 2.6 H14 V13.4 H1 Z" fill="#d2d266"/><path d="M8.6 2.6 H14.2" stroke="#9a9a8a" stroke-width="0.9"/><rect x="1.1" y="3" width="1" height="10.4" fill="#f4f4e0"/><path d="M2.5 4.2 H13.5 M2.5 12.3 H13.5" stroke="#ecec5a" stroke-width="1" stroke-dasharray="1.3,0.8"/><path d="M2 1.5 H7" stroke="#e8e860" stroke-width="1.2" stroke-dasharray="1.3,0.8"/><rect x="14" y="3.2" width="1.8" height="12" fill="#2c2c2c"/><rect x="1" y="13.3" width="14.8" height="1.9" fill="#343434"/></svg>
<div class="t" style="left:110.70px;top:442.32px;font-size:12px;color:#000;letter-spacing:-0.190px">cp_l2_block</div>
<svg style="left:72.3px;top:465.8px" width="9" height="9" viewBox="0 0 9 9"><rect x="0.5" y="0.5" width="8" height="7.6" rx="1.2" fill="url(#eg)" stroke="#c2c2c2"/><path d="M2 4.3 H7" stroke="#5b8ad2" stroke-width="1.1"/><path d="M4.5 1.5 V7.3" stroke="#2d4fa6" stroke-width="1.1"/></svg>
<div class="abs" style="left:81px;top:470px;width:7px;height:1px;background:repeating-linear-gradient(90deg,#9a9a9a 0 1px,transparent 1px 2px)"></div>
<svg style="left:88px;top:462.18px" width="17" height="16" viewBox="0 0 17 16"><rect x="0" y="2.4" width="1.1" height="12.8" fill="#b4b4b4"/><path d="M1 1.2 Q1.5 0.3 2.5 0.3 H7 L8.6 2.6 H14 V13.4 H1 Z" fill="#d2d266"/><path d="M8.6 2.6 H14.2" stroke="#9a9a8a" stroke-width="0.9"/><rect x="1.1" y="3" width="1" height="10.4" fill="#f4f4e0"/><path d="M2.5 4.2 H13.5 M2.5 12.3 H13.5" stroke="#ecec5a" stroke-width="1" stroke-dasharray="1.3,0.8"/><path d="M2 1.5 H7" stroke="#e8e860" stroke-width="1.2" stroke-dasharray="1.3,0.8"/><rect x="14" y="3.2" width="1.8" height="12" fill="#2c2c2c"/><rect x="1" y="13.3" width="14.8" height="1.9" fill="#343434"/></svg>
<div class="t" style="left:110.70px;top:463.86px;font-size:12px;color:#000;letter-spacing:-0.194px">cp_tune_block</div>
<svg style="left:72.3px;top:487.8px" width="9" height="9" viewBox="0 0 9 9"><rect x="0.5" y="0.5" width="8" height="7.6" rx="1.2" fill="url(#eg)" stroke="#c2c2c2"/><path d="M2 4.3 H7" stroke="#5b8ad2" stroke-width="1.1"/><path d="M4.5 1.5 V7.3" stroke="#2d4fa6" stroke-width="1.1"/></svg>
<div class="abs" style="left:81px;top:492px;width:7px;height:1px;background:repeating-linear-gradient(90deg,#9a9a9a 0 1px,transparent 1px 2px)"></div>
<svg style="left:88px;top:483.71999999999997px" width="17" height="16" viewBox="0 0 17 16"><rect x="0" y="2.4" width="1.1" height="12.8" fill="#b4b4b4"/><path d="M1 1.2 Q1.5 0.3 2.5 0.3 H7 L8.6 2.6 H14 V13.4 H1 Z" fill="#d2d266"/><path d="M8.6 2.6 H14.2" stroke="#9a9a8a" stroke-width="0.9"/><rect x="1.1" y="3" width="1" height="10.4" fill="#f4f4e0"/><path d="M2.5 4.2 H13.5 M2.5 12.3 H13.5" stroke="#ecec5a" stroke-width="1" stroke-dasharray="1.3,0.8"/><path d="M2 1.5 H7" stroke="#e8e860" stroke-width="1.2" stroke-dasharray="1.3,0.8"/><rect x="14" y="3.2" width="1.8" height="12" fill="#2c2c2c"/><rect x="1" y="13.3" width="14.8" height="1.9" fill="#343434"/></svg>
<div class="t" style="left:110.70px;top:485.40px;font-size:12px;color:#000;letter-spacing:-0.196px">cp_hwconst_block</div>
<svg style="left:72.3px;top:508.8px" width="9" height="9" viewBox="0 0 9 9"><rect x="0.5" y="0.5" width="8" height="7.6" rx="1.2" fill="url(#eg)" stroke="#c2c2c2"/><path d="M2 4.3 H7" stroke="#5b8ad2" stroke-width="1.1"/><path d="M4.5 1.5 V7.3" stroke="#2d4fa6" stroke-width="1.1"/></svg>
<div class="abs" style="left:81px;top:513px;width:7px;height:1px;background:repeating-linear-gradient(90deg,#9a9a9a 0 1px,transparent 1px 2px)"></div>
<svg style="left:88px;top:505.26px" width="17" height="16" viewBox="0 0 17 16"><rect x="0" y="2.4" width="1.1" height="12.8" fill="#b4b4b4"/><path d="M1 1.2 Q1.5 0.3 2.5 0.3 H7 L8.6 2.6 H14 V13.4 H1 Z" fill="#d2d266"/><path d="M8.6 2.6 H14.2" stroke="#9a9a8a" stroke-width="0.9"/><rect x="1.1" y="3" width="1" height="10.4" fill="#f4f4e0"/><path d="M2.5 4.2 H13.5 M2.5 12.3 H13.5" stroke="#ecec5a" stroke-width="1" stroke-dasharray="1.3,0.8"/><path d="M2 1.5 H7" stroke="#e8e860" stroke-width="1.2" stroke-dasharray="1.3,0.8"/><rect x="14" y="3.2" width="1.8" height="12" fill="#2c2c2c"/><rect x="1" y="13.3" width="14.8" height="1.9" fill="#343434"/></svg>
<div class="t" style="left:110.70px;top:506.94px;font-size:12px;color:#000;letter-spacing:-0.183px">cp_gps_driver_block</div>
<svg style="left:72.3px;top:530.8px" width="9" height="9" viewBox="0 0 9 9"><rect x="0.5" y="0.5" width="8" height="7.6" rx="1.2" fill="url(#eg)" stroke="#c2c2c2"/><path d="M2 4.3 H7" stroke="#5b8ad2" stroke-width="1.1"/><path d="M4.5 1.5 V7.3" stroke="#2d4fa6" stroke-width="1.1"/></svg>
<div class="abs" style="left:81px;top:535px;width:7px;height:1px;background:repeating-linear-gradient(90deg,#9a9a9a 0 1px,transparent 1px 2px)"></div>
<svg style="left:88px;top:526.8px" width="17" height="16" viewBox="0 0 17 16"><rect x="0" y="2.4" width="1.1" height="12.8" fill="#b4b4b4"/><path d="M1 1.2 Q1.5 0.3 2.5 0.3 H7 L8.6 2.6 H14 V13.4 H1 Z" fill="#d2d266"/><path d="M8.6 2.6 H14.2" stroke="#9a9a8a" stroke-width="0.9"/><rect x="1.1" y="3" width="1" height="10.4" fill="#f4f4e0"/><path d="M2.5 4.2 H13.5 M2.5 12.3 H13.5" stroke="#ecec5a" stroke-width="1" stroke-dasharray="1.3,0.8"/><path d="M2 1.5 H7" stroke="#e8e860" stroke-width="1.2" stroke-dasharray="1.3,0.8"/><rect x="14" y="3.2" width="1.8" height="12" fill="#2c2c2c"/><rect x="1" y="13.3" width="14.8" height="1.9" fill="#343434"/></svg>
<div class="t" style="left:110.70px;top:528.48px;font-size:12px;color:#000;letter-spacing:-0.200px">cp_gps_app_block</div>
<svg style="left:72.3px;top:551.8px" width="9" height="9" viewBox="0 0 9 9"><rect x="0.5" y="0.5" width="8" height="7.6" rx="1.2" fill="url(#eg)" stroke="#c2c2c2"/><path d="M2 4.3 H7" stroke="#5b8ad2" stroke-width="1.1"/><path d="M4.5 1.5 V7.3" stroke="#2d4fa6" stroke-width="1.1"/></svg>
<div class="abs" style="left:81px;top:556px;width:7px;height:1px;background:repeating-linear-gradient(90deg,#9a9a9a 0 1px,transparent 1px 2px)"></div>
<svg style="left:88px;top:548.3399999999999px" width="17" height="16" viewBox="0 0 17 16"><rect x="0" y="2.4" width="1.1" height="12.8" fill="#b4b4b4"/><path d="M1 1.2 Q1.5 0.3 2.5 0.3 H7 L8.6 2.6 H14 V13.4 H1 Z" fill="#d2d266"/><path d="M8.6 2.6 H14.2" stroke="#9a9a8a" stroke-width="0.9"/><rect x="1.1" y="3" width="1" height="10.4" fill="#f4f4e0"/><path d="M2.5 4.2 H13.5 M2.5 12.3 H13.5" stroke="#ecec5a" stroke-width="1" stroke-dasharray="1.3,0.8"/><path d="M2 1.5 H7" stroke="#e8e860" stroke-width="1.2" stroke-dasharray="1.3,0.8"/><rect x="14" y="3.2" width="1.8" height="12" fill="#2c2c2c"/><rect x="1" y="13.3" width="14.8" height="1.9" fill="#343434"/></svg>
<div class="t" style="left:110.70px;top:550.02px;font-size:12px;color:#000;letter-spacing:-0.200px">cp_dsp_block</div>
<svg style="left:72.3px;top:573.8px" width="9" height="9" viewBox="0 0 9 9"><rect x="0.5" y="0.5" width="8" height="7.6" rx="1.2" fill="url(#eg)" stroke="#c2c2c2"/><path d="M2 4.3 H7" stroke="#5b8ad2" stroke-width="1.1"/><path d="M4.5 1.5 V7.3" stroke="#2d4fa6" stroke-width="1.1"/></svg>
<div class="abs" style="left:81px;top:578px;width:7px;height:1px;background:repeating-linear-gradient(90deg,#9a9a9a 0 1px,transparent 1px 2px)"></div>
<svg style="left:88px;top:569.88px" width="17" height="16" viewBox="0 0 17 16"><rect x="0" y="2.4" width="1.1" height="12.8" fill="#b4b4b4"/><path d="M1 1.2 Q1.5 0.3 2.5 0.3 H7 L8.6 2.6 H14 V13.4 H1 Z" fill="#d2d266"/><path d="M8.6 2.6 H14.2" stroke="#9a9a8a" stroke-width="0.9"/><rect x="1.1" y="3" width="1" height="10.4" fill="#f4f4e0"/><path d="M2.5 4.2 H13.5 M2.5 12.3 H13.5" stroke="#ecec5a" stroke-width="1" stroke-dasharray="1.3,0.8"/><path d="M2 1.5 H7" stroke="#e8e860" stroke-width="1.2" stroke-dasharray="1.3,0.8"/><rect x="14" y="3.2" width="1.8" height="12" fill="#2c2c2c"/><rect x="1" y="13.3" width="14.8" height="1.9" fill="#343434"/></svg>
<div class="t" style="left:110.70px;top:571.56px;font-size:12px;color:#000;letter-spacing:-0.202px">cp_equ_block</div>
<svg style="left:72.3px;top:594.8px" width="9" height="9" viewBox="0 0 9 9"><rect x="0.5" y="0.5" width="8" height="7.6" rx="1.2" fill="url(#eg)" stroke="#c2c2c2"/><path d="M2 4.3 H7" stroke="#5b8ad2" stroke-width="1.1"/><path d="M4.5 1.5 V7.3" stroke="#2d4fa6" stroke-width="1.1"/></svg>
<div class="abs" style="left:81px;top:599px;width:7px;height:1px;background:repeating-linear-gradient(90deg,#9a9a9a 0 1px,transparent 1px 2px)"></div>
<svg style="left:88px;top:591.42px" width="17" height="16" viewBox="0 0 17 16"><rect x="0" y="2.4" width="1.1" height="12.8" fill="#b4b4b4"/><path d="M1 1.2 Q1.5 0.3 2.5 0.3 H7 L8.6 2.6 H14 V13.4 H1 Z" fill="#d2d266"/><path d="M8.6 2.6 H14.2" stroke="#9a9a8a" stroke-width="0.9"/><rect x="1.1" y="3" width="1" height="10.4" fill="#f4f4e0"/><path d="M2.5 4.2 H13.5 M2.5 12.3 H13.5" stroke="#ecec5a" stroke-width="1" stroke-dasharray="1.3,0.8"/><path d="M2 1.5 H7" stroke="#e8e860" stroke-width="1.2" stroke-dasharray="1.3,0.8"/><rect x="14" y="3.2" width="1.8" height="12" fill="#2c2c2c"/><rect x="1" y="13.3" width="14.8" height="1.9" fill="#343434"/></svg>
<div class="t" style="left:110.70px;top:593.10px;font-size:12px;color:#000;letter-spacing:-0.182px">cp_vris_block</div>
<svg style="left:72.3px;top:616.8px" width="9" height="9" viewBox="0 0 9 9"><rect x="0.5" y="0.5" width="8" height="7.6" rx="1.2" fill="url(#eg)" stroke="#c2c2c2"/><path d="M2 4.3 H7" stroke="#5b8ad2" stroke-width="1.1"/><path d="M4.5 1.5 V7.3" stroke="#2d4fa6" stroke-width="1.1"/></svg>
<div class="abs" style="left:81px;top:621px;width:7px;height:1px;background:repeating-linear-gradient(90deg,#9a9a9a 0 1px,transparent 1px 2px)"></div>
<svg style="left:88px;top:612.96px" width="17" height="16" viewBox="0 0 17 16"><rect x="0" y="2.4" width="1.1" height="12.8" fill="#b4b4b4"/><path d="M1 1.2 Q1.5 0.3 2.5 0.3 H7 L8.6 2.6 H14 V13.4 H1 Z" fill="#d2d266"/><path d="M8.6 2.6 H14.2" stroke="#9a9a8a" stroke-width="0.9"/><rect x="1.1" y="3" width="1" height="10.4" fill="#f4f4e0"/><path d="M2.5 4.2 H13.5 M2.5 12.3 H13.5" stroke="#ecec5a" stroke-width="1" stroke-dasharray="1.3,0.8"/><path d="M2 1.5 H7" stroke="#e8e860" stroke-width="1.2" stroke-dasharray="1.3,0.8"/><rect x="14" y="3.2" width="1.8" height="12" fill="#2c2c2c"/><rect x="1" y="13.3" width="14.8" height="1.9" fill="#343434"/></svg>
<div class="t" style="left:110.70px;top:614.64px;font-size:12px;color:#000;letter-spacing:-0.195px">cp_ergo_cache_block</div>
<svg style="left:72.3px;top:637.8px" width="9" height="9" viewBox="0 0 9 9"><rect x="0.5" y="0.5" width="8" height="7.6" rx="1.2" fill="url(#eg)" stroke="#c2c2c2"/><path d="M2 4.3 H7" stroke="#5b8ad2" stroke-width="1.1"/><path d="M4.5 1.5 V7.3" stroke="#2d4fa6" stroke-width="1.1"/></svg>
<div class="abs" style="left:81px;top:642px;width:7px;height:1px;background:repeating-linear-gradient(90deg,#9a9a9a 0 1px,transparent 1px 2px)"></div>
<svg style="left:88px;top:634.5px" width="17" height="16" viewBox="0 0 17 16"><rect x="0" y="2.4" width="1.1" height="12.8" fill="#b4b4b4"/><path d="M1 1.2 Q1.5 0.3 2.5 0.3 H7 L8.6 2.6 H14 V13.4 H1 Z" fill="#d2d266"/><path d="M8.6 2.6 H14.2" stroke="#9a9a8a" stroke-width="0.9"/><rect x="1.1" y="3" width="1" height="10.4" fill="#f4f4e0"/><path d="M2.5 4.2 H13.5 M2.5 12.3 H13.5" stroke="#ecec5a" stroke-width="1" stroke-dasharray="1.3,0.8"/><path d="M2 1.5 H7" stroke="#e8e860" stroke-width="1.2" stroke-dasharray="1.3,0.8"/><rect x="14" y="3.2" width="1.8" height="12" fill="#2c2c2c"/><rect x="1" y="13.3" width="14.8" height="1.9" fill="#343434"/></svg>
<div class="t" style="left:110.70px;top:636.18px;font-size:12px;color:#000;letter-spacing:-0.192px">cp_elog_block</div>
<svg style="left:72.3px;top:659.8px" width="9" height="9" viewBox="0 0 9 9"><rect x="0.5" y="0.5" width="8" height="7.6" rx="1.2" fill="url(#eg)" stroke="#c2c2c2"/><path d="M2 4.3 H7" stroke="#5b8ad2" stroke-width="1.1"/><path d="M4.5 1.5 V7.3" stroke="#2d4fa6" stroke-width="1.1"/></svg>
<div class="abs" style="left:81px;top:664px;width:7px;height:1px;background:repeating-linear-gradient(90deg,#9a9a9a 0 1px,transparent 1px 2px)"></div>
<svg style="left:88px;top:656.04px" width="17" height="16" viewBox="0 0 17 16"><rect x="0" y="2.4" width="1.1" height="12.8" fill="#b4b4b4"/><path d="M1 1.2 Q1.5 0.3 2.5 0.3 H7 L8.6 2.6 H14 V13.4 H1 Z" fill="#d2d266"/><path d="M8.6 2.6 H14.2" stroke="#9a9a8a" stroke-width="0.9"/><rect x="1.1" y="3" width="1" height="10.4" fill="#f4f4e0"/><path d="M2.5 4.2 H13.5 M2.5 12.3 H13.5" stroke="#ecec5a" stroke-width="1" stroke-dasharray="1.3,0.8"/><path d="M2 1.5 H7" stroke="#e8e860" stroke-width="1.2" stroke-dasharray="1.3,0.8"/><rect x="14" y="3.2" width="1.8" height="12" fill="#2c2c2c"/><rect x="1" y="13.3" width="14.8" height="1.9" fill="#343434"/></svg>
<div class="t" style="left:110.70px;top:657.72px;font-size:12px;color:#000;letter-spacing:-0.193px">cp_browser_block</div>
<svg style="left:72.3px;top:681.8px" width="9" height="9" viewBox="0 0 9 9"><rect x="0.5" y="0.5" width="8" height="7.6" rx="1.2" fill="url(#eg)" stroke="#c2c2c2"/><path d="M2 4.3 H7" stroke="#5b8ad2" stroke-width="1.1"/><path d="M4.5 1.5 V7.3" stroke="#2d4fa6" stroke-width="1.1"/></svg>
<div class="abs" style="left:81px;top:686px;width:7px;height:1px;background:repeating-linear-gradient(90deg,#9a9a9a 0 1px,transparent 1px 2px)"></div>
<svg style="left:88px;top:677.5799999999999px" width="17" height="16" viewBox="0 0 17 16"><rect x="0" y="2.4" width="1.1" height="12.8" fill="#b4b4b4"/><path d="M1 1.2 Q1.5 0.3 2.5 0.3 H7 L8.6 2.6 H14 V13.4 H1 Z" fill="#d2d266"/><path d="M8.6 2.6 H14.2" stroke="#9a9a8a" stroke-width="0.9"/><rect x="1.1" y="3" width="1" height="10.4" fill="#f4f4e0"/><path d="M2.5 4.2 H13.5 M2.5 12.3 H13.5" stroke="#ecec5a" stroke-width="1" stroke-dasharray="1.3,0.8"/><path d="M2 1.5 H7" stroke="#e8e860" stroke-width="1.2" stroke-dasharray="1.3,0.8"/><rect x="14" y="3.2" width="1.8" height="12" fill="#2c2c2c"/><rect x="1" y="13.3" width="14.8" height="1.9" fill="#343434"/></svg>
<div class="t" style="left:110.70px;top:679.26px;font-size:12px;color:#000;letter-spacing:-0.197px">cp_browser_pm_area_block</div>
</div>
<div class="abs" style="left:316px;top:90px;width:3px;height:602px;background:#e8e8e8"></div>
<div class="abs" style="left:319px;top:90px;width:530px;height:433px;background:#e4e4e4"></div>
<div class="abs" style="left:319px;top:90px;width:1px;height:430px;background:#8a8a8a"></div>
<div class="abs" style="left:320px;top:90px;width:527px;height:430px;background:#ababab;border:2px solid #262626;border-top-width:2px"></div>
<div class="abs" style="left:322px;top:92px;width:270px;height:303.1px;background:#fff"></div>
<div class="abs" style="left:322px;top:113px;width:43px;height:2px;background:#b4b4b4"></div>
<div class="abs" style="left:364px;top:113px;width:228px;height:2px;background:#b9b9b9"></div>
<div class="abs" style="left:322px;top:134px;width:43px;height:2px;background:#cacaca"></div>
<div class="abs" style="left:364px;top:134px;width:228px;height:2px;background:#b9b9b9"></div>
<div class="abs" style="left:322px;top:156px;width:43px;height:2px;background:#cacaca"></div>
<div class="abs" style="left:364px;top:156px;width:228px;height:2px;background:#b9b9b9"></div>
<div class="abs" style="left:322px;top:177px;width:43px;height:2px;background:#cacaca"></div>
<div class="abs" style="left:364px;top:177px;width:228px;height:2px;background:#b9b9b9"></div>
<div class="abs" style="left:322px;top:199px;width:43px;height:2px;background:#cacaca"></div>
<div class="abs" style="left:364px;top:199px;width:228px;height:2px;background:#b9b9b9"></div>
<div class="abs" style="left:322px;top:221px;width:43px;height:2px;background:#cacaca"></div>
<div class="abs" style="left:364px;top:221px;width:228px;height:2px;background:#b9b9b9"></div>
<div class="abs" style="left:322px;top:242px;width:43px;height:2px;background:#cacaca"></div>
<div class="abs" style="left:364px;top:242px;width:228px;height:2px;background:#b9b9b9"></div>
<div class="abs" style="left:322px;top:264px;width:43px;height:2px;background:#cacaca"></div>
<div class="abs" style="left:364px;top:264px;width:228px;height:2px;background:#b9b9b9"></div>
<div class="abs" style="left:322px;top:285px;width:43px;height:2px;background:#cacaca"></div>
<div class="abs" style="left:364px;top:285px;width:228px;height:2px;background:#b9b9b9"></div>
<div class="abs" style="left:322px;top:307px;width:43px;height:2px;background:#cacaca"></div>
<div class="abs" style="left:364px;top:307px;width:228px;height:2px;background:#b9b9b9"></div>
<div class="abs" style="left:322px;top:329px;width:43px;height:2px;background:#cacaca"></div>
<div class="abs" style="left:364px;top:329px;width:228px;height:2px;background:#b9b9b9"></div>
<div class="abs" style="left:322px;top:350px;width:43px;height:2px;background:#cacaca"></div>
<div class="abs" style="left:364px;top:350px;width:228px;height:2px;background:#b9b9b9"></div>
<div class="abs" style="left:322px;top:372px;width:43px;height:2px;background:#cacaca"></div>
<div class="abs" style="left:364px;top:372px;width:228px;height:2px;background:#b9b9b9"></div>
<div class="abs" style="left:322px;top:393px;width:43px;height:2px;background:#cacaca"></div>
<div class="abs" style="left:364px;top:393px;width:228px;height:2px;background:#b9b9b9"></div>
<div class="abs" style="left:364px;top:92px;width:2px;height:302px;background:#bdbdbd"></div>
<div class="abs" style="left:508px;top:92px;width:2px;height:302px;background:#bdbdbd"></div>
<div class="t" style="left:404.70px;top:98.22px;font-size:12.5px;color:#000;letter-spacing:0.113px;font-weight:bold">Field Name</div>
<div class="t" style="left:517.50px;top:98.22px;font-size:12.5px;color:#000;letter-spacing:0.240px;font-weight:bold">Field Value</div>
<div class="t" style="left:349.06px;top:118.59px;font-size:13px;color:#000">1</div>
<div class="t" style="left:368.10px;top:118.59px;font-size:13px;color:#000;letter-spacing:-0.806px">freq_band_table</div>
<div class="abs" style="left:510.3px;top:114.90px;width:81px;height:21.70px;background:#ebebeb;border-top:1px solid #fcfcfc;border-left:1px solid #fcfcfc;border-right:2px solid #646464;border-bottom:2px solid #646464"></div>
<div class="t" style="left:531.10px;top:118.59px;font-size:13px;color:#000;letter-spacing:-1.058px">Expand</div>
<div class="t" style="left:349.06px;top:140.19px;font-size:13px;color:#000">2</div>
<div class="t" style="left:368.10px;top:140.19px;font-size:13px;color:#000;letter-spacing:-0.816px">duplex_space_table</div>
<div class="abs" style="left:510.3px;top:136.50px;width:81px;height:21.70px;background:#ebebeb;border-top:1px solid #fcfcfc;border-left:1px solid #fcfcfc;border-right:2px solid #646464;border-bottom:2px solid #646464"></div>
<div class="t" style="left:528.24px;top:140.19px;font-size:13px;color:#000;letter-spacing:-0.867px">Collapse</div>
<div class="t" style="left:349.06px;top:161.79px;font-size:13px;color:#000">3</div>
<div class="t" style="left:497.36px;top:161.79px;font-size:13px;color:#000">0</div>
<div class="t" style="left:514.00px;top:161.79px;font-size:13px;color:#2e2ef0;letter-spacing:-0.992px">10000000</div>
<div class="t" style="left:349.06px;top:183.39px;font-size:13px;color:#000">4</div>
<div class="t" style="left:497.36px;top:183.39px;font-size:13px;color:#000">1</div>
<div class="t" style="left:514.00px;top:183.39px;font-size:13px;color:#2e2ef0;letter-spacing:-0.992px">45000000</div>
<div class="t" style="left:349.06px;top:204.99px;font-size:13px;color:#000">5</div>
<div class="t" style="left:497.36px;top:204.99px;font-size:13px;color:#000">2</div>
<div class="t" style="left:514.00px;top:204.99px;font-size:13px;color:#2e2ef0">0</div>
<div class="t" style="left:349.06px;top:226.59px;font-size:13px;color:#000">6</div>
<div class="t" style="left:497.36px;top:226.59px;font-size:13px;color:#000">3</div>
<div class="t" style="left:514.00px;top:226.59px;font-size:13px;color:#2e2ef0;letter-spacing:-0.992px">10000000</div>
<div class="t" style="left:349.06px;top:248.19px;font-size:13px;color:#000">7</div>
<div class="t" style="left:497.36px;top:248.19px;font-size:13px;color:#000">4</div>
<div class="t" style="left:514.00px;top:248.19px;font-size:13px;color:#2e2ef0;letter-spacing:-0.992px">10000000</div>
<div class="t" style="left:349.06px;top:269.79px;font-size:13px;color:#000">8</div>
<div class="t" style="left:497.36px;top:269.79px;font-size:13px;color:#000">5</div>
<div class="t" style="left:514.00px;top:269.79px;font-size:13px;color:#2e2ef0;letter-spacing:-0.992px">10000000</div>
<div class="t" style="left:349.06px;top:291.39px;font-size:13px;color:#000">9</div>
<div class="t" style="left:497.36px;top:291.39px;font-size:13px;color:#000">6</div>
<div class="t" style="left:514.00px;top:291.39px;font-size:13px;color:#2e2ef0;letter-spacing:-0.992px">10000000</div>
<div class="t" style="left:343.58px;top:312.99px;font-size:13px;color:#000;letter-spacing:-1.735px">10</div>
<div class="abs" style="left:365.6px;top:308.65px;width:143px;height:20.30px;background:#0078d7"></div>
<svg style="left:328.5px;top:314.5px" width="7" height="11" viewBox="0 0 7 11"><path d="M0.3 0.3 L5.8 5 L0.3 9.8 Z" fill="#333"/></svg>
<div class="t" style="left:497.36px;top:312.99px;font-size:13px;color:#fff">7</div>
<div class="t" style="left:514.00px;top:312.99px;font-size:13px;color:#2e2ef0;letter-spacing:-1.012px">7600000</div>
<div class="t" style="left:344.42px;top:334.59px;font-size:13px;color:#000;letter-spacing:-1.620px">11</div>
<div class="t" style="left:368.10px;top:334.59px;font-size:13px;color:#000;letter-spacing:-0.778px">channel_offset</div>
<div class="abs" style="left:510.3px;top:330.90px;width:81px;height:21.70px;background:#ebebeb;border-top:1px solid #fcfcfc;border-left:1px solid #fcfcfc;border-right:2px solid #646464;border-bottom:2px solid #646464"></div>
<div class="t" style="left:531.10px;top:334.59px;font-size:13px;color:#000;letter-spacing:-1.058px">Expand</div>
<div class="t" style="left:343.58px;top:356.19px;font-size:13px;color:#000;letter-spacing:-1.735px">12</div>
<div class="t" style="left:368.10px;top:356.19px;font-size:13px;color:#000;letter-spacing:-0.875px">DMO_duplex_space_table</div>
<div class="abs" style="left:510.3px;top:352.50px;width:81px;height:21.70px;background:#ebebeb;border-top:1px solid #fcfcfc;border-left:1px solid #fcfcfc;border-right:2px solid #646464;border-bottom:2px solid #646464"></div>
<div class="t" style="left:531.10px;top:356.19px;font-size:13px;color:#000;letter-spacing:-1.058px">Expand</div>
<div class="t" style="left:343.58px;top:377.79px;font-size:13px;color:#000;letter-spacing:-1.735px">13</div>
<div class="t" style="left:368.10px;top:377.79px;font-size:13px;color:#000;letter-spacing:-0.976px">spare</div>
<div class="abs" style="left:510.3px;top:374.10px;width:81px;height:21.70px;background:#ebebeb;border-top:1px solid #fcfcfc;border-left:1px solid #fcfcfc;border-right:2px solid #646464;border-bottom:2px solid #646464"></div>
<div class="t" style="left:531.10px;top:377.79px;font-size:13px;color:#000;letter-spacing:-1.058px">Expand</div>
<div class="abs" style="left:319px;top:523px;width:529px;height:167px;background:#fff;border:1px solid #a0a0a0"></div>
<div class="abs" style="left:399px;top:524px;width:448px;height:22px;background:#f0f0f0"></div>
<div class="t" style="left:329.50px;top:528.99px;font-size:13px;color:#000;letter-spacing:-0.824px">Find Result</div>
<div class="abs" style="left:328px;top:551.5px;width:511px;height:129.5px;background:#f0f0f0;border:1px solid #a0a8b4"></div>
<div class="abs" style="left:330px;top:661px;width:18px;height:18px;background:#f0f0f0;border-right:1px solid #a0a0a0;border-bottom:1px solid #a0a0a0"></div>
<svg style="left:335px;top:665px" width="6" height="10" viewBox="0 0 6 10"><path d="M5.5 0.5 L0.5 5 L5.5 9.5 Z" fill="#000"/></svg>
<div class="abs" style="left:348px;top:661px;width:468px;height:18px;background:#f0f0f0;border:1px solid #fff;border-right:2px solid #7a7a7a;border-bottom:2px solid #7a7a7a;border-left:2px solid #c0c0c0"></div>
<div class="abs" style="left:819px;top:661px;width:18px;height:18px;background:#f0f0f0;border-right:1px solid #a0a0a0;border-bottom:1px solid #a0a0a0"></div>
<svg style="left:826px;top:665px" width="6" height="10" viewBox="0 0 6 10"><path d="M0.5 0.5 L5.5 5 L0.5 9.5 Z" fill="#000"/></svg>
<div class="abs" style="left:848px;top:88px;width:9px;height:604px;background:linear-gradient(90deg,#dcdcdc 0 1px,#a2a2a2 1px 4px,#dfe2e6 4px 6px,#a0a0a0 6px 8px,#b8b8b8 8px 9px)"></div>
<div class="abs" style="left:857px;top:87px;width:166px;height:605px;background:#f0f0f0;border-top:1px solid #a0a0a0"></div>
<div class="t" style="left:862.00px;top:92.49px;font-size:13px;color:#6a6a6a;letter-spacing:-0.552px">Radios</div>
<svg style="left:903.6px;top:95.7px" width="78" height="7" viewBox="0 0 78 7"><rect x="0.00" y="0.0" width="1.5" height="1.5" fill="#aaaaaa"/><rect x="4.25" y="0.0" width="1.5" height="1.5" fill="#aaaaaa"/><rect x="8.50" y="0.0" width="1.5" height="1.5" fill="#aaaaaa"/><rect x="12.75" y="0.0" width="1.5" height="1.5" fill="#aaaaaa"/><rect x="17.00" y="0.0" width="1.5" height="1.5" fill="#aaaaaa"/><rect x="21.25" y="0.0" width="1.5" height="1.5" fill="#aaaaaa"/><rect x="25.50" y="0.0" width="1.5" height="1.5" fill="#aaaaaa"/><rect x="29.75" y="0.0" width="1.5" height="1.5" fill="#aaaaaa"/><rect x="34.00" y="0.0" width="1.5" height="1.5" fill="#aaaaaa"/><rect x="38.25" y="0.0" width="1.5" height="1.5" fill="#aaaaaa"/><rect x="42.50" y="0.0" width="1.5" height="1.5" fill="#aaaaaa"/><rect x="46.75" y="0.0" width="1.5" height="1.5" fill="#aaaaaa"/><rect x="51.00" y="0.0" width="1.5" height="1.5" fill="#aaaaaa"/><rect x="55.25" y="0.0" width="1.5" height="1.5" fill="#aaaaaa"/><rect x="59.50" y="0.0" width="1.5" height="1.5" fill="#aaaaaa"/><rect x="63.75" y="0.0" width="1.5" height="1.5" fill="#aaaaaa"/><rect x="68.00" y="0.0" width="1.5" height="1.5" fill="#aaaaaa"/><rect x="72.25" y="0.0" width="1.5" height="1.5" fill="#aaaaaa"/><rect x="2.12" y="2.35" width="1.5" height="1.5" fill="#aaaaaa"/><rect x="6.38" y="2.35" width="1.5" height="1.5" fill="#aaaaaa"/><rect x="10.62" y="2.35" width="1.5" height="1.5" fill="#aaaaaa"/><rect x="14.88" y="2.35" width="1.5" height="1.5" fill="#aaaaaa"/><rect x="19.12" y="2.35" width="1.5" height="1.5" fill="#aaaaaa"/><rect x="23.38" y="2.35" width="1.5" height="1.5" fill="#aaaaaa"/><rect x="27.62" y="2.35" width="1.5" height="1.5" fill="#aaaaaa"/><rect x="31.88" y="2.35" width="1.5" height="1.5" fill="#aaaaaa"/><rect x="36.12" y="2.35" width="1.5" height="1.5" fill="#aaaaaa"/><rect x="40.38" y="2.35" width="1.5" height="1.5" fill="#aaaaaa"/><rect x="44.62" y="2.35" width="1.5" height="1.5" fill="#aaaaaa"/><rect x="48.88" y="2.35" width="1.5" height="1.5" fill="#aaaaaa"/><rect x="53.12" y="2.35" width="1.5" height="1.5" fill="#aaaaaa"/><rect x="57.38" y="2.35" width="1.5" height="1.5" fill="#aaaaaa"/><rect x="61.62" y="2.35" width="1.5" height="1.5" fill="#aaaaaa"/><rect x="65.88" y="2.35" width="1.5" height="1.5" fill="#aaaaaa"/><rect x="70.12" y="2.35" width="1.5" height="1.5" fill="#aaaaaa"/><rect x="0.00" y="4.6" width="1.5" height="1.5" fill="#aaaaaa"/><rect x="4.25" y="4.6" width="1.5" height="1.5" fill="#aaaaaa"/><rect x="8.50" y="4.6" width="1.5" height="1.5" fill="#aaaaaa"/><rect x="12.75" y="4.6" width="1.5" height="1.5" fill="#aaaaaa"/><rect x="17.00" y="4.6" width="1.5" height="1.5" fill="#aaaaaa"/><rect x="21.25" y="4.6" width="1.5" height="1.5" fill="#aaaaaa"/><rect x="25.50" y="4.6" width="1.5" height="1.5" fill="#aaaaaa"/><rect x="29.75" y="4.6" width="1.5" height="1.5" fill="#aaaaaa"/><rect x="34.00" y="4.6" width="1.5" height="1.5" fill="#aaaaaa"/><rect x="38.25" y="4.6" width="1.5" height="1.5" fill="#aaaaaa"/><rect x="42.50" y="4.6" width="1.5" height="1.5" fill="#aaaaaa"/><rect x="46.75" y="4.6" width="1.5" height="1.5" fill="#aaaaaa"/><rect x="51.00" y="4.6" width="1.5" height="1.5" fill="#aaaaaa"/><rect x="55.25" y="4.6" width="1.5" height="1.5" fill="#aaaaaa"/><rect x="59.50" y="4.6" width="1.5" height="1.5" fill="#aaaaaa"/><rect x="63.75" y="4.6" width="1.5" height="1.5" fill="#aaaaaa"/><rect x="68.00" y="4.6" width="1.5" height="1.5" fill="#aaaaaa"/><rect x="72.25" y="4.6" width="1.5" height="1.5" fill="#aaaaaa"/></svg>
<svg style="left:1006.5px;top:92.5px" width="8" height="11" viewBox="0 0 8 11"><rect x="1.5" y="0.5" width="5" height="6.5" fill="#c8c8c8" stroke="#6a6a6a" stroke-width="1.1"/><rect x="4.2" y="1" width="1.6" height="6" fill="#707070"/><path d="M0 7.5 H8" stroke="#6a6a6a" stroke-width="1.2"/><path d="M4 8 V11" stroke="#6a6a6a" stroke-width="1.2"/></svg>
<div class="abs" style="left:857px;top:110px;width:155px;height:1px;background:#a0a0a0"></div>
<div class="abs" style="left:857px;top:188px;width:155px;height:1px;background:#a0a0a0"></div>
<div class="abs" style="left:857px;top:265px;width:155px;height:1px;background:#a0a0a0"></div>
<div class="abs" style="left:857px;top:343px;width:155px;height:1px;background:#a0a0a0"></div>
<div class="abs" style="left:857px;top:420px;width:155px;height:1px;background:#a0a0a0"></div>
<div class="abs" style="left:857px;top:498px;width:155px;height:1px;background:#a0a0a0"></div>
<div class="abs" style="left:857px;top:576px;width:155px;height:1px;background:#a0a0a0"></div>
<div class="abs" style="left:857px;top:653px;width:155px;height:1px;background:#a0a0a0"></div>
<div class="abs" style="left:857px;top:110px;width:1px;height:544px;background:#a0a0a0"></div>
<div class="abs" style="left:934px;top:110px;width:1px;height:544px;background:#a0a0a0"></div>
<div class="abs" style="left:1012px;top:110px;width:1px;height:544px;background:#a0a0a0"></div>
<div class="abs" style="left:1px;top:692px;width:1022px;height:1px;background:#6e6e6e"></div>
<div class="abs" style="left:3px;top:693px;width:140px;height:23px;background:#f5f5f5;border-top:2px solid #727272;border-left:2px solid #727272;border-bottom:2px solid #fcfcfc;border-right:2px solid #fcfcfc"></div>
<div class="t" style="left:43.75px;top:698.42px;font-size:12.5px;color:#000;letter-spacing:-0.488px">Codeplug1*</div>
<div class="abs" style="left:147px;top:693px;width:1px;height:23px;background:#6a6a6a"></div>
<div class="abs" style="left:1px;top:722px;width:1022px;height:1px;background:#dadada"></div>
<svg style="left:862px;top:727px" width="17" height="15" viewBox="0 0 17 15"><path d="M3 7.5 A5.2 5.2 0 0 1 12 3.6" fill="none" stroke="#000" stroke-width="2.6"/><path d="M9.5 4.2 L16.2 3.2 L14.6 9 Z" fill="#000"/><path d="M14 7.5 A5.2 5.2 0 0 1 5 11.4" fill="none" stroke="#000" stroke-width="2.6"/><path d="M7.5 10.8 L0.8 11.8 L2.4 6 Z" fill="#000"/></svg>
<svg style="left:963px;top:726px" width="15" height="16" viewBox="0 0 15 16"><path d="M1 2.3 L3.5 1 L5.2 2.3 L7.3 0.8 L9.4 2.3 L11.1 1 L13.6 2.3 V8 Q13.6 12.2 7.3 15.2 Q1 12.2 1 8 Z" fill="#fafcff" stroke="#4a6890" stroke-width="1"/></svg>
<div class="abs" style="left:1018px;top:732px;width:2px;height:2px;background:#b0b0b0"></div>
<div class="abs" style="left:1014px;top:736px;width:2px;height:2px;background:#b0b0b0"></div>
<div class="abs" style="left:1018px;top:736px;width:2px;height:2px;background:#b0b0b0"></div>
<div class="abs" style="left:1010px;top:740px;width:2px;height:2px;background:#b0b0b0"></div>
<div class="abs" style="left:1014px;top:740px;width:2px;height:2px;background:#b0b0b0"></div>
<div class="abs" style="left:1018px;top:740px;width:2px;height:2px;background:#b0b0b0"></div>
</body></html>
